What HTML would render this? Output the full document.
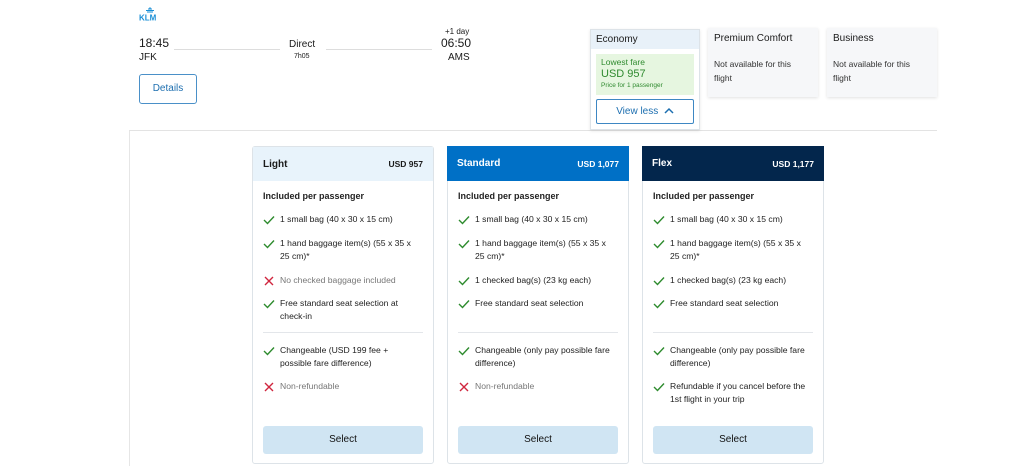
<!DOCTYPE html>
<html><head><meta charset="utf-8"><style>
*{margin:0;padding:0;box-sizing:border-box}
body{width:1026px;height:466px;background:#fff;font-family:"Liberation Sans",sans-serif;color:#1a1a1a;position:relative;overflow:hidden}
.a{position:absolute}
.card{position:absolute;top:146px;width:182px;height:318px;border:1px solid #dde3e8;border-radius:3px;background:#fff}
.hd{height:34px;display:flex;justify-content:space-between;align-items:center;padding:0 10px;font-size:10px;font-weight:bold}
.card .t{position:absolute;left:10px;font-size:9px;line-height:13px;color:#222}
.card .i{position:absolute;left:10px;width:12px;height:10px}
.card .txt{position:absolute;left:27px;width:140px;font-size:8.6px;line-height:13px;color:#222}
.g{color:#777!important}
.div{position:absolute;left:10px;right:10px;top:185px;border-top:1px solid #e3e6ea}
.sel{position:absolute;left:10px;right:10px;top:279px;height:28px;background:#d0e5f3;border-radius:3px;font-size:10px;text-align:center;line-height:28px;color:#111}
</style></head><body>
<div class="a" style="left:129px;top:130px;width:1px;height:336px;background:#e6e6e6"></div>
<div class="a" style="left:129px;top:130px;width:808px;height:1px;background:#e3e3e3"></div>
<svg class="a" style="left:139px;top:7px" width="22" height="14" viewBox="0 0 22 14">
<path d="M8 5h6M7 3.5h8M9 2h4" stroke="#1a8fd6" stroke-width="1"/><circle cx="11" cy="1" r="0.8" fill="#1a8fd6"/>
<text x="0" y="13.5" font-family="Liberation Sans" font-weight="bold" font-size="8" fill="#1a8fd6">KLM</text></svg>
<div class="a" style="left:139px;top:36px;font-size:12px">18:45</div>
<div class="a" style="left:139px;top:52px;font-size:10px">JFK</div>
<div class="a" style="left:174px;top:49px;width:106px;height:1px;background:#ddd"></div>
<div class="a" style="left:326px;top:49px;width:106px;height:1px;background:#ddd"></div>
<div class="a" style="left:289px;top:39px;font-size:10px">Direct</div>
<div class="a" style="left:294px;top:53px;font-size:7px">7h05</div>
<div class="a" style="left:445px;top:27px;font-size:8px">+1 day</div>
<div class="a" style="left:441px;top:36px;font-size:12px">06:50</div>
<div class="a" style="left:448px;top:52px;font-size:10px">AMS</div>
<div class="a" style="left:139px;top:74px;width:58px;height:30px;border:1px solid #4a90c8;border-radius:3px;color:#1d6fb0;font-size:10px;text-align:center;line-height:28px">Details</div>

<div class="a" style="left:590px;top:29px;width:110px;height:101px;border:1px solid #dde3e8;background:#fff;box-shadow:0 1px 3px rgba(0,0,0,.1)">
<div style="height:19px;background:#e8f1f9;font-size:10px;padding:4px 5px">Economy</div>
<div style="margin:5px 5px 0;height:41px;background:#e6f6e0;padding:3px 5px;color:#2f8a2f">
<div style="font-size:8.5px">Lowest fare</div><div style="font-size:11px;margin-top:1px">USD 957</div><div style="font-size:6.5px;margin-top:2px">Price for 1 passenger</div></div>
<div style="margin:4px 5px 0;height:25px;border:1px solid #3d87c3;border-radius:2px;color:#1d6fb0;font-size:10px;text-align:center;line-height:23px">View less &nbsp;<svg width="10" height="7" viewBox="0 0 10 7"><path d="M1 6L5 2L9 6" stroke="#1d6fb0" stroke-width="1.5" fill="none"/></svg></div>
</div>
<div class="a" style="left:708px;top:28px;width:110px;height:69px;background:#f6f7f9;box-shadow:0 1px 3px rgba(0,0,0,.12);padding:5px 6px">
<div style="font-size:10px">Premium Comfort</div><div style="font-size:8.5px;line-height:14px;margin-top:13px;color:#333;width:90px">Not available for this flight</div></div>
<div class="a" style="left:827px;top:28px;width:110px;height:69px;background:#f6f7f9;box-shadow:0 1px 3px rgba(0,0,0,.12);padding:5px 6px">
<div style="font-size:10px">Business</div><div style="font-size:8.5px;line-height:14px;margin-top:13px;color:#333;width:90px">Not available for this flight</div></div>

<svg width="0" height="0" style="position:absolute"><defs>
<symbol id="ck" viewBox="0 0 12 10"><path d="M1 5L4.5 8.5L11 1.5" stroke="#2e8b2e" stroke-width="1.4" fill="none"/></symbol>
<symbol id="x" viewBox="0 0 12 10"><path d="M2 1L10 9M10 1L2 9" stroke="#d0263e" stroke-width="1.4"/></symbol></defs></svg>

<div class="card" style="left:252px">
<div class="hd" style="background:#e8f3fb"><span>Light</span><span style="font-size:8.5px">USD 957</span></div>
<div class="t" style="top:43px;font-weight:bold">Included per passenger</div>
<svg class="i" style="top:68px"><use href="#ck"/></svg><div class="txt" style="top:66px">1 small bag (40 x 30 x 15 cm)</div>
<svg class="i" style="top:92px"><use href="#ck"/></svg><div class="txt" style="top:90px">1 hand baggage item(s) (55 x 35 x 25 cm)*</div>
<svg class="i" style="top:129px"><use href="#x"/></svg><div class="txt g" style="top:127px">No checked baggage included</div>
<svg class="i" style="top:152px"><use href="#ck"/></svg><div class="txt" style="top:150px">Free standard seat selection at check-in</div>
<div class="div"></div>
<svg class="i" style="top:199px"><use href="#ck"/></svg><div class="txt" style="top:197px">Changeable (USD 199 fee + possible fare difference)</div>
<svg class="i" style="top:235px"><use href="#x"/></svg><div class="txt g" style="top:233px">Non-refundable</div>
<div class="sel">Select</div></div>

<div class="card" style="left:447px">
<div class="hd" style="background:#0070c6;color:#fff;margin:-1px -1px 0;height:35px"><span>Standard</span><span style="font-size:8.5px">USD 1,077</span></div>
<div class="t" style="top:43px;font-weight:bold">Included per passenger</div>
<svg class="i" style="top:68px"><use href="#ck"/></svg><div class="txt" style="top:66px">1 small bag (40 x 30 x 15 cm)</div>
<svg class="i" style="top:92px"><use href="#ck"/></svg><div class="txt" style="top:90px">1 hand baggage item(s) (55 x 35 x 25 cm)*</div>
<svg class="i" style="top:129px"><use href="#ck"/></svg><div class="txt" style="top:127px">1 checked bag(s) (23 kg each)</div>
<svg class="i" style="top:152px"><use href="#ck"/></svg><div class="txt" style="top:150px">Free standard seat selection</div>
<div class="div"></div>
<svg class="i" style="top:199px"><use href="#ck"/></svg><div class="txt" style="top:197px">Changeable (only pay possible fare difference)</div>
<svg class="i" style="top:235px"><use href="#x"/></svg><div class="txt g" style="top:233px">Non-refundable</div>
<div class="sel">Select</div></div>

<div class="card" style="left:642px">
<div class="hd" style="background:#03264c;color:#fff;margin:-1px -1px 0;height:35px"><span>Flex</span><span style="font-size:8.5px">USD 1,177</span></div>
<div class="t" style="top:43px;font-weight:bold">Included per passenger</div>
<svg class="i" style="top:68px"><use href="#ck"/></svg><div class="txt" style="top:66px">1 small bag (40 x 30 x 15 cm)</div>
<svg class="i" style="top:92px"><use href="#ck"/></svg><div class="txt" style="top:90px">1 hand baggage item(s) (55 x 35 x 25 cm)*</div>
<svg class="i" style="top:129px"><use href="#ck"/></svg><div class="txt" style="top:127px">1 checked bag(s) (23 kg each)</div>
<svg class="i" style="top:152px"><use href="#ck"/></svg><div class="txt" style="top:150px">Free standard seat selection</div>
<div class="div"></div>
<svg class="i" style="top:199px"><use href="#ck"/></svg><div class="txt" style="top:197px">Changeable (only pay possible fare difference)</div>
<svg class="i" style="top:235px"><use href="#ck"/></svg><div class="txt" style="top:233px">Refundable if you cancel before the 1st flight in your trip</div>
<div class="sel">Select</div></div>
</body></html>
